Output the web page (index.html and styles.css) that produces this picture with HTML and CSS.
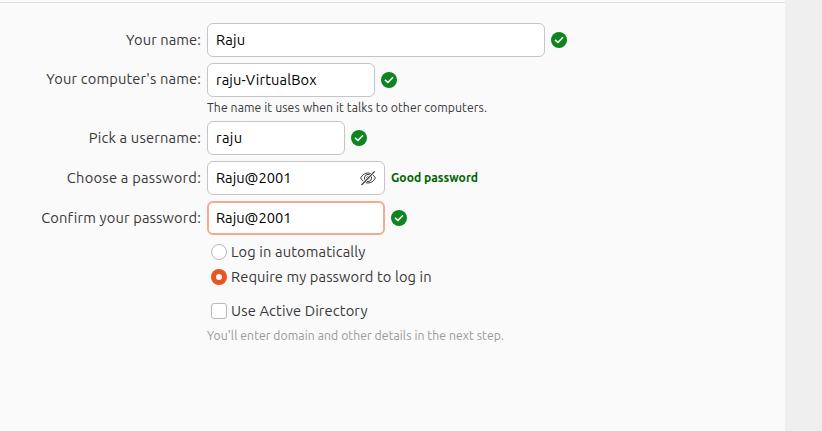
FILE: index.html
```html
<!DOCTYPE html>
<html lang="en">
<head>
<meta charset="utf-8">
<title>Who are you?</title>
<link rel="stylesheet" href="styles.css">
</head>
<body>
<svg class="symbols" aria-hidden="true">
  <symbol id="ok" viewBox="0 0 16 16">
    <circle cx="8" cy="8" r="8" fill="#0e8420"/>
    <path d="M4 7.8 6.900 10.500 12 5.300" fill="none" stroke="#fff" stroke-width="1.6"/>
  </symbol>
</svg>
<main class="page">
  <form class="form">
    <div class="row">
      <label class="label t-name" for="name">Your name:</label>
      <input class="field w-name v-name" id="name" value="Raju">
      <svg class="ok"><use href="#ok"/></svg>
    </div>
    <div class="row">
      <label class="label raised t-computer" for="host">Your computer's name:</label>
      <input class="field w-host v-host" id="host" value="raju-VirtualBox">
      <svg class="ok"><use href="#ok"/></svg>
    </div>
    <p class="help">The name it uses when it talks to other computers.</p>
    <div class="row">
      <label class="label t-user" for="user">Pick a username:</label>
      <input class="field w-user v-user" id="user" value="raju">
      <svg class="ok"><use href="#ok"/></svg>
    </div>
    <div class="row">
      <label class="label t-choose" for="pass">Choose a password:</label>
      <div class="field secret">
        <span class="v-pass">Raju@2001</span>
        <svg class="eye" viewBox="0 0 16 16" fill="none" stroke="#3d3d3d">
          <path d="M.6 8C2.3 4.6 5 3 8 3s5.700 1.600 7.400 5C13.700 11.400 11 13 8 13S2.300 11.400.6 8Z"/>
          <circle cx="8" cy="8" r="3.600"/>
          <circle cx="8" cy="8" r="1.300"/>
          <path d="M1.500 15 14.700 1.300" stroke="#fff" stroke-width="2.6"/>
          <path d="M1.500 15 14.700 1.300" stroke-width="1.200"/>
        </svg>
      </div>
      <strong class="strength">Good password</strong>
    </div>
    <div class="row">
      <label class="label t-confirm" for="again">Confirm your password:</label>
      <input class="field w-pass focused v-pass" id="again" value="Raju@2001">
      <svg class="ok"><use href="#ok"/></svg>
    </div>
    <div class="options">
      <label class="option"><span class="radio"></span><span class="t-auto">Log in automatically</span></label>
      <label class="option"><span class="radio checked"></span><span class="t-require">Require my password to log in</span></label>
      <label class="option directory"><span class="checkbox"></span><span class="t-directory">Use Active Directory</span></label>
    </div>
    <p class="hint">You'll enter domain and other details in the next step.</p>
  </form>
</main>
</body>
</html>
```
FILE: styles.css
```css
* { box-sizing: border-box; }
body {
  margin: 0;
  height: 431px;
  overflow: hidden;
  background: #efefef;
  color: #383838;
  font: 14.667px/20px "Ubuntu", "Noto Sans", sans-serif;
}
.symbols { position: absolute; width: 0; height: 0; }
.page {
  width: 785px;
  height: 431px;
  padding-top: 2px;
  background: #fafafa;
}
.form { border-top: 1px solid #dedede; padding-top: 20px; }
.row { display: flex; align-items: center; height: 34px; margin-bottom: 6px; }
.label { width: 201px; margin-right: 6px; text-align: right; white-space: nowrap; }
.raised { padding-bottom: 2px; }
.field {
  height: 34px;
  padding: 0 8px;
  border: 1px solid #c5c5c5;
  border-radius: 6px;
  outline: 0;
  background: #fff;
  color: #000;
  font: inherit;
}
input.field { padding-bottom: 2px; }
.w-name { width: 338px; }
.w-host { width: 168px; }
.w-user { width: 138px; }
.w-pass { width: 178px; }
.secret { display: flex; align-items: center; justify-content: space-between; width: 178px; }
input.focused { border: 2px solid #f4aa90; padding: 0 7px 2px; }
.ok { width: 16px; height: 16px; margin-left: 6px; }
.eye { width: 16px; height: 16px; }
.strength { margin-left: 6px; color: #006400; font-size: 12.1px; white-space: nowrap; }
.help, .hint { margin: 0 0 0 207px; font-size: 12.2px; line-height: 16px; letter-spacing: .08px; white-space: nowrap; }
.help { margin-top: -3px; margin-bottom: 5px; letter-spacing: .09px; }
.hint { margin-top: 7px; color: #999; }
.options { margin-left: 211px; padding-top: 1px; }
.option { display: flex; align-items: center; gap: 4px; height: 20px; margin-bottom: 5px; white-space: nowrap; }
.directory { margin-top: 14px; margin-bottom: 0; }
.radio, .checkbox { flex: none; width: 16px; height: 16px; border: 1px solid #b9b9b9; background: #fff; }
.radio { border-radius: 50%; }
.checkbox { border-radius: 3px; }
.radio.checked { display: grid; place-items: center; border: 0; background: #e95420; }
.checked::after { content: ""; width: 6px; height: 6px; border-radius: 50%; background: #fff; }
.t-name, .t-require { letter-spacing: .1px; }
.t-confirm, .t-directory, .t-computer { letter-spacing: .15px; }
.t-user { letter-spacing: .17px; }
.t-choose { letter-spacing: .25px; }
.t-auto, .v-host { letter-spacing: .13px; }
.v-user { letter-spacing: .35px; }
.v-name { letter-spacing: .2px; }
```
